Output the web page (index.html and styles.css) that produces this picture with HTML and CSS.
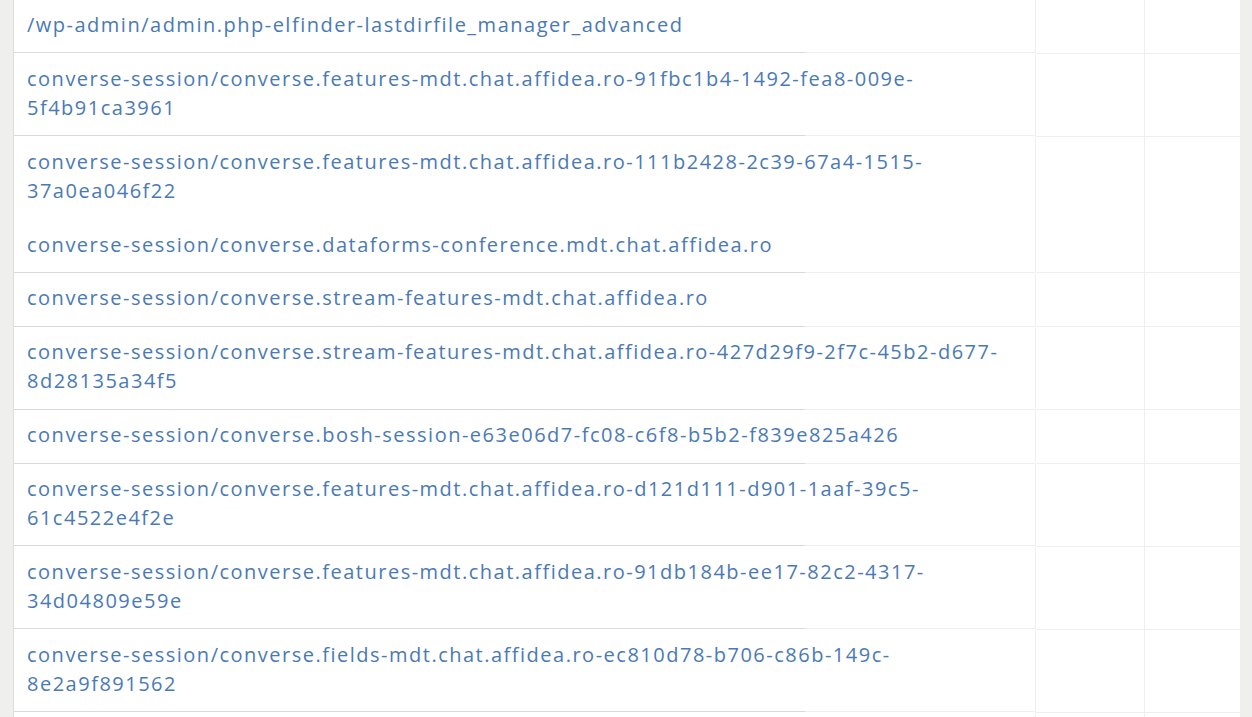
FILE: index.html
```html
<!DOCTYPE html>
<html lang="en">
<head>
  <meta charset="UTF-8">
  <title>Paths</title>
  <link rel="stylesheet" href="styles.css">
</head>
<body>
<main class="panel">
  <table class="paths">
    <colgroup>
      <col class="col-path">
      <col class="col-a">
      <col class="col-b">
    </colgroup>
    <tbody>
      <tr>
        <td class="path"><a href="#">/wp-admin/admin.php-elfinder-lastdirfile_manager_advanced</a></td>
        <td></td>
        <td></td>
      </tr>
      <tr>
        <td class="path"><a href="#">converse-session/converse.features-mdt.chat.affidea.ro-91fbc1b4-1492-fea8-009e-<br>5f4b91ca3961</a></td>
        <td></td>
        <td></td>
      </tr>
      <tr>
        <td class="path">
          <a href="#">converse-session/converse.features-mdt.chat.affidea.ro-111b2428-2c39-67a4-1515-<br>37a0ea046f22</a>
          <a href="#" class="next">converse-session/converse.dataforms-conference.mdt.chat.affidea.ro</a>
        </td>
        <td></td>
        <td></td>
      </tr>
      <tr>
        <td class="path"><a href="#">converse-session/converse.stream-features-mdt.chat.affidea.ro</a></td>
        <td></td>
        <td></td>
      </tr>
      <tr>
        <td class="path"><a href="#">converse-session/converse.stream-features-mdt.chat.affidea.ro-427d29f9-2f7c-45b2-d677-<br>8d28135a34f5</a></td>
        <td></td>
        <td></td>
      </tr>
      <tr>
        <td class="path"><a href="#">converse-session/converse.bosh-session-e63e06d7-fc08-c6f8-b5b2-f839e825a426</a></td>
        <td></td>
        <td></td>
      </tr>
      <tr>
        <td class="path"><a href="#">converse-session/converse.features-mdt.chat.affidea.ro-d121d111-d901-1aaf-39c5-<br>61c4522e4f2e</a></td>
        <td></td>
        <td></td>
      </tr>
      <tr>
        <td class="path"><a href="#">converse-session/converse.features-mdt.chat.affidea.ro-91db184b-ee17-82c2-4317-<br>34d04809e59e</a></td>
        <td></td>
        <td></td>
      </tr>
      <tr>
        <td class="path"><a href="#">converse-session/converse.fields-mdt.chat.affidea.ro-ec810d78-b706-c86b-149c-<br>8e2a9f891562</a></td>
        <td></td>
        <td></td>
      </tr>
      <tr>
        <td class="path"><a href="#">converse-session/converse.features-mdt.chat.affidea.ro</a></td>
        <td></td>
        <td></td>
      </tr>
    </tbody>
  </table>
</main>
</body>
</html>
```

FILE: styles.css
```css
html,
body {
  margin: 0;
  height: 100%;
  overflow: hidden;
}

body {
  background-color: #efefed;
  font-family: "Open Sans", "Liberation Sans", sans-serif;
}

.panel {
  margin-left: 13px;
  width: 1226px;
  min-height: 100%;
  background-color: white;
  border-left: 1px solid #dedede;
}

.paths {
  width: 100%;
  border-collapse: collapse;
  table-layout: fixed;
}

.col-path { width: 1021px; }
.col-a { width: 109px; }
.col-b { width: auto; }

.paths td {
  padding: 11px 13px 13px 13px;
  border-bottom: 1px solid #efefef;
  border-left: 1px solid #efefef;
  vertical-align: top;
  font-size: 20px;
  line-height: 28.9px;
}

.paths td.path {
  border-left: none;
  border-bottom-color: transparent;
  background-image: linear-gradient(#d9d9d9, #d9d9d9), linear-gradient(#efefef, #efefef);
  background-origin: border-box;
  background-position: left bottom, left bottom;
  background-size: 791px 1px, 100% 1px;
  background-repeat: no-repeat;
}

.paths a {
  display: block;
  color: #4a7ab6;
  text-decoration: none;
  letter-spacing: 1.5px;
}

.paths a.next {
  margin-top: 25px;
}
```
